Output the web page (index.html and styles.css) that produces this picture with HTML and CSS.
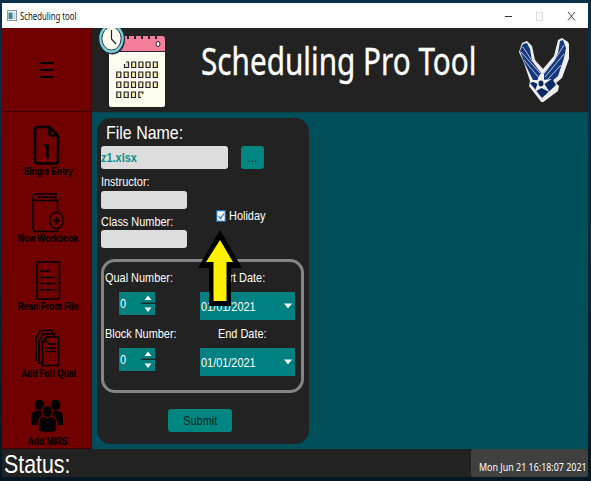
FILE: index.html
```html
<!DOCTYPE html>
<html lang="en">
<head>
<meta charset="utf-8">
<title>Scheduling tool</title>
<link rel="stylesheet" href="styles.css">
</head>
<body>
<div class="window">
  <div class="titlebar">
    <svg class="app-icon" width="10" height="11" viewBox="0 0 10 11"><rect x=".5" y=".5" width="9" height="10" fill="#eef3f6" stroke="#8b969e"/><rect x="1.5" y="2.5" width="4" height="6.5" fill="#3d8580"/><rect x="6.3" y="2.5" width="2" height="6.5" fill="#bfd3e8"/></svg>
    <span class="caption">Scheduling tool</span>
    <svg class="controls" width="76" height="12" viewBox="0 0 76 12" fill="none"><path d="M1 6.500h7" stroke="#333"/><rect x="32.500" y="2.500" width="6" height="8" stroke="#ddd"/><path d="M64 2l7 8.500M71 2l-7 8.500" stroke="#444"/></svg>
  </div>
  <div class="body">
    <nav class="sidebar">
      <div class="menu"><svg width="14" height="18" viewBox="0 0 14 18"><path d="M0 2h14M0 9h14M0 16h14" stroke="#000" stroke-width="2"/></svg></div>
      <div class="item">
        <svg width="28" height="42" viewBox="0 0 28 42" fill="none" stroke="#000" stroke-width="2.600"><path d="M5 3h11.500l8.500 9v25q0 2.500-2.500 2.500H5q-3 0-3-3V6q0-3 3-3zM16.500 3v6q0 2.500 2.500 2.500h6M10.500 21.500h4V34" stroke-linejoin="round"/></svg>
        <span class="nav-label">Single Entry</span>
      </div>
      <div class="item">
        <svg class="book" width="34" height="42" viewBox="0 0 34 42" fill="none" stroke="#000" stroke-width="1.500"><path d="M26 3H5Q2 3 2 6v32q0 2.500 3 2.500h21.500v-3M2 6q0 3.500 3 3.500h21.500V21M26 3q-3 3 0 6.500M6 6.200h18"/><ellipse cx="25.500" cy="29.500" rx="6.800" ry="8.300"/><path d="M22 29.500h7M25.500 25.500v8" stroke-width="1.700"/></svg>
        <span class="nav-label">New Workbook</span>
      </div>
      <div class="item">
        <svg class="doc" width="26" height="42" viewBox="0 0 26 42" fill="none" stroke="#000" stroke-width="1.700"><rect x="2" y="3" width="22.500" height="37" rx="1.500"/><path d="M5 12h10M5 18.500h16.500M5 24.500h16.500M5 31h16.500"/></svg>
        <span class="nav-label">Read From File</span>
      </div>
      <div class="item">
        <svg width="26" height="42" viewBox="0 0 26 42" fill="none" stroke="#000" stroke-width="1.600"><path d="M5 34H2V12l4.500-7.500H18V8M8.500 37H5V15l4-7h11.500v3M12 11h12.500v28.500H8.500V15.500zM12 11v5H8.500M14 18h8M11 22h11M11 25.500h11"/></svg>
        <span class="nav-label">Add Full Qual</span>
      </div>
      <div class="item">
        <svg width="34" height="42" viewBox="0 0 34 42"><g fill="#000"><ellipse cx="9.500" cy="11" rx="4.800" ry="5.500"/><ellipse cx="25.500" cy="11" rx="4.800" ry="5.500"/><path d="M1 31V24q0-7 6-7h6v14zM33 31V24q0-7-6-7h-6v14z"/></g><g fill="#000" stroke="#700000" stroke-width="1.300"><path d="M8.500 37v-8q0-7 6-7h6q6 0 6 7v8q-8.500 4-18 0z"/><ellipse cx="17.300" cy="17.500" rx="5.200" ry="6.200"/></g></svg>
        <span class="nav-label">Add MIRS</span>
      </div>
    </nav>
    <div class="content">
      <header class="banner">
        <svg class="calendar" width="70" height="82" viewBox="0 0 70 82">
          <path d="M11 24h56v53q0 2-2 2H13q-2 0-2-2z" fill="#fffdf0"/>
          <path d="M14 8h50q3 0 3 3v12H11V11z" fill="#f57f9b"/>
          <path d="M11 23.500h56" stroke="#252134" stroke-width="1.200"/>
          <path d="M30 7v4M37 7v4M44 7v4M51 7v4M58 7v4" stroke="#222" stroke-width="2"/>
          <ellipse cx="60" cy="16" rx="2" ry="2.500" fill="#fff" stroke="#222"/>
          <g fill="#faf0a2" stroke="#252134" stroke-width="1.200"><path d="M26.500 36v3.500h4V34h-2.500M33.700 34h4v5.500h-4zM40.900 34h4v5.500h-4zM48.100 34h4v5.500h-4zM55.300 34h4v5.500h-4z"/><path d="M18.800 44h4v5.500h-4zM26.200 44h4v5.500h-4zM33.500 44h4v5.500h-4zM40.800 44h4v5.500h-4zM48 44h4v5.500h-4zM55.300 44h4v5.500h-4zM18.800 54h4v5.500h-4zM26.200 54h4v5.500h-4zM33.500 54h4v5.500h-4zM40.800 54h4v5.500h-4zM48 54h4v5.500h-4zM55.300 54h4v5.500h-4zM18.800 64h4v5.500h-4zM26.200 64h4v5.500h-4zM33.500 64h4v5.500h-4zM43 69.500h-2.200V64h4v2"/></g>
          <ellipse cx="14.500" cy="11.500" rx="12.500" ry="15" fill="#252134"/>
          <ellipse cx="13.500" cy="10.500" rx="11" ry="13.200" fill="#fffdf0" stroke="#6ed0d8" stroke-width="2.600"/>
          <ellipse cx="13.500" cy="10.500" rx="9.600" ry="11.600" fill="none" stroke="#252134" stroke-width=".9"/>
          <path d="M13.500 2v9l4.500 5" fill="none" stroke="#252134" stroke-width="1.200"/>
        </svg>
        <h1>Scheduling Pro Tool</h1>
        <svg class="emblem" width="50" height="64" viewBox="0 0 50 64">
          <path d="M3 5l5-2 5 5 3 14 8 9 11-13 4-16 4-2 6 4 3 7-1 7-8 22-6 5 3 3-1 5-16 12-13-17 1-5L5 25 0 14z" fill="#eee"/>
          <path d="M4 6l4-1 3 6 2 12 9 12v7h-8L5 24 1 13zM41 3l3-1 3 8-2 10-6 18-7 6-7-2v-6l10-13 4-8z" fill="#15377e"/>
          <path d="M4 9l9 14M2 14l19 21M5 22l16 19M45 7L35 23 24 36M45 16L26 39M42 27L29 41" fill="none" stroke="#bdc8de"/>
          <path d="M11 45l9-3h14l3 5-14 13z" fill="#0d2866"/>
          <path d="M21.500 35l2 7 9-1-7 5 5 8-8-4-7 4 3-8-8-4 8 0z" fill="#f1f1f1"/>
          <ellipse cx="22" cy="45.500" rx="2.500" ry="3" fill="#102655"/>
        </svg>
      </header>
      <main>
        <form class="panel">
          <div class="file-title"><span class="tx">File Name:</span></div>
          <div class="file-row"><div class="field file"><span class="tx">z1.xlsx</span></div><div class="btn browse"><span class="tx">...</span></div></div>
          <div class="middle">
            <div class="names">
              <div class="lab"><span class="tx">Instructor:</span></div><div class="field"></div>
              <div class="lab second"><span class="tx">Class Number:</span></div><div class="field"></div>
            </div>
            <div class="holiday"><svg width="10" height="12" viewBox="0 0 10 12"><rect x=".7" y=".7" width="8.600" height="10.600" fill="#fff" stroke="#1769bd" stroke-width="1.200"/><path d="M2.500 6l2 2.500 3.500-5" fill="none" stroke="#1769bd" stroke-width="1.100"/></svg><span class="tx">Holiday</span></div>
          </div>
          <div class="group">
            <div class="col numbers">
              <div class="lab"><span class="tx">Qual Number:</span></div>
              <div class="spin"><span class="tx">0</span><svg width="14" height="23" viewBox="0 0 14 23"><path d="M0 11.300h14" stroke="#222" stroke-width="1.300"/><path d="M3.500 8L7 3.500 10.500 8zM3.500 15.500L7 20l3.500-4.500z" fill="#fff"/></svg></div>
              <div class="lab"><span class="tx">Block Number:</span></div>
              <div class="spin"><span class="tx">0</span><svg width="14" height="23" viewBox="0 0 14 23"><path d="M0 11.300h14" stroke="#222" stroke-width="1.300"/><path d="M3.500 8L7 3.500 10.500 8zM3.500 15.500L7 20l3.500-4.500z" fill="#fff"/></svg></div>
            </div>
            <div class="col dates">
              <div class="lab start"><span class="tx">Start Date:</span></div>
              <div class="date"><span class="tx">01/01/2021</span><svg width="14" height="28" viewBox="0 0 14 28"><path d="M3 11.500h8L7 16.500z" fill="#fff"/></svg></div>
              <div class="lab"><span class="tx">End Date:</span></div>
              <div class="date"><span class="tx">01/01/2021</span><svg width="14" height="28" viewBox="0 0 14 28"><path d="M3 11.500h8L7 16.500z" fill="#fff"/></svg></div>
            </div>
          </div>
          <div class="btn submit"><span class="tx">Submit</span></div>
          <svg class="pointer" width="46" height="78" viewBox="0 0 46 78"><path d="M22 1L44 39H33V77H11V39H0z"/><path d="M22 11l13 22h-6.500v39h-13V33H8z" fill="#fff200"/></svg>
        </form>
      </main>
    </div>
  </div>
  <footer class="status"><span class="tx state">Status:</span><div class="clock"><span>Mon Jun 21 16:18:07 2021</span></div></footer>
</div>
</body>
</html>
```
FILE: styles.css
```css
* { box-sizing: border-box; }
body {
  margin: 0;
  width: 591px;
  height: 481px;
  padding: 3px 3px 4px 2px;
  overflow: hidden;
  background: linear-gradient(#0a304a 0, #06283a 50%, #021724 100%);
  font: 13px/16px "Liberation Sans", sans-serif;
  color: #fff;
}
svg { display: block; flex: none; }
.window { width: 586px; height: 474px; display: flex; flex-direction: column; background: #222; }
.titlebar { height: 25px; display: flex; align-items: center; background: #fff; color: #111; padding-left: 5px; }
.caption { font: 10px/14px "Noto Sans", sans-serif; margin-left: 3px; white-space: nowrap; transform: scaleX(.775); transform-origin: left; }
.controls { margin-left: auto; margin-right: 8px; }
.body { height: 421px; display: flex; }
.sidebar { width: 90px; background: #700000; border-right: 1px solid #500000; border-bottom: 1px solid #400000; }
.menu { height: 84px; display: flex; align-items: center; justify-content: center; border-bottom: 1px solid #400000; }
.item { height: 67.4px; display: flex; flex-direction: column; align-items: center; padding-top: 12px; color: #000; }
.book { margin-left: 2px; }
.doc { margin-left: 2px; }
.nav-label { font: bold 10px/11px "Liberation Sans", sans-serif; white-space: nowrap; margin: 0 0 0 3px; transform: scaleX(.84); -webkit-text-stroke: .2px #000; }
.content { width: 496px; }
.banner { height: 84px; display: flex; background: #222; overflow: hidden; padding-left: 6px; }
h1 { margin: 5px 0 0 33px; width: 318px; font: 39px/54px "Noto Sans", sans-serif; white-space: nowrap; transform: scaleX(.762); transform-origin: left; -webkit-text-stroke: .4px #fff; }
.emblem { margin: 10px 0 0 0; }
main { height: 337px; background: #004f5a; border-top: 1px solid #04444d; padding: 5px; }
.panel { position: relative; width: 212px; height: 326px; background: #222; border-radius: 14px; padding: 4px 4px 0; }
.tx { display: inline-block; white-space: nowrap; transform: scaleX(.84); transform-origin: left; }
.file-title { height: 24px; padding-left: 5px; font-size: 19px; line-height: 21px; }
.file-row { display: flex; gap: 13px; }
.field { width: 86px; height: 18px; border-radius: 3px; background: #ddd; }
.field.file { width: 127px; height: 23px; color: #0a8f8a; font-weight: bold; line-height: 24px; }
.btn { display: flex; align-items: center; justify-content: center; border-radius: 3px; background: #008681; color: #052020; }
.btn .tx { transform-origin: center; }
.browse { width: 23px; height: 23px; }
.middle { display: flex; height: 90px; }
.names { width: 115px; }
.lab { height: 22px; line-height: 26px; }
.names .lab.second { height: 21px; line-height: 25px; }
.holiday { display: flex; gap: 3px; height: 16px; align-items: center; margin-top: 39px; }
.group { width: 203px; height: 134px; border: 3px solid #858585; border-radius: 14px; display: flex; padding-left: 1px; }
.numbers { width: 95px; }
.dates { width: 95px; }
.col .lab { height: 30px; line-height: 32px; }
.dates .lab { padding-left: 18px; }
.dates .lab.start { padding-left: 13px; }
.spin { display: flex; width: 36px; height: 23px; margin: 0 0 3px 14px; padding-left: 1px; background: #00817e; justify-content: space-between; line-height: 23px; }
.date { display: flex; width: 95px; height: 28px; margin-bottom: -2px; background: #008080; line-height: 29px; justify-content: space-between; padding-left: 1px; }
.submit { width: 64px; height: 23px; margin: 16px 0 0 67px; }
.pointer { position: absolute; left: 101px; top: 111px; }
.status { height: 28px; display: flex; justify-content: space-between; }
.state { font-size: 26px; line-height: 30px; margin-left: 2px; transform: scaleX(.82); }
.clock { width: 117px; height: 28px; border-radius: 3px; background: #404040; padding: 10px 0 0 8px; }
.clock span { display: inline-block; font: 11px/16px "Noto Sans", sans-serif; white-space: nowrap; transform: scaleX(.81); transform-origin: left; }
```
